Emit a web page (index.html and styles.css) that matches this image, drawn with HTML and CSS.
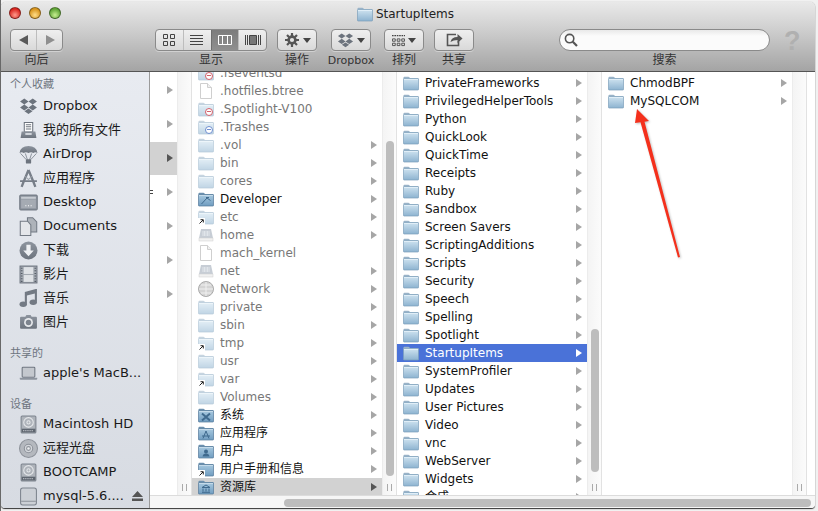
FILE: index.html
```html
<!DOCTYPE html>
<html lang="zh">
<head>
<meta charset="utf-8">
<title>StartupItems</title>
<link rel="stylesheet" href="styles.css">
</head>
<body>
<svg class="defs" width="0" height="0" aria-hidden="true">
  <defs>
    <linearGradient id="fg" x1="0" y1="0" x2="0" y2="1"><stop offset="0" stop-color="#cfe3f0"/><stop offset="1" stop-color="#8db3d0"/></linearGradient>
    <linearGradient id="fgd" x1="0" y1="0" x2="0" y2="1"><stop offset="0" stop-color="#a9cae0"/><stop offset="1" stop-color="#6f9cc0"/></linearGradient>
    <linearGradient id="sg" x1="0" y1="0" x2="0" y2="1"><stop offset="0" stop-color="#8d949e"/><stop offset="1" stop-color="#6d747e"/></linearGradient>
    <symbol id="folder" viewBox="0 0 16 16">
      <path d="M.5 4V2.600q0-.9.9-.9h4q.7 0 1 .6l.5.7h8q.6 0 .6.7V5z" fill="#9ab3c8"/>
      <rect x=".5" y="3.600" width="15" height="11.400" rx=".6" fill="url(#fg)" stroke="#7d9fba" stroke-width=".7"/>
      <rect x="1" y="4" width="14" height=".8" fill="#e8f3fa"/>
    </symbol>
    <symbol id="folderd" viewBox="0 0 16 16">
      <path d="M.5 4V2.600q0-.9.9-.9h4q.7 0 1 .6l.5.7h8q.6 0 .6.7V5z" fill="#6c90ae"/>
      <rect x=".5" y="3.600" width="15" height="11.400" rx=".6" fill="url(#fgd)" stroke="#55799a" stroke-width=".7"/>
      <rect x="1" y="4" width="14" height=".8" fill="#cde0ee"/>
    </symbol>
    <symbol id="f-dev" viewBox="0 0 16 16"><use href="#folderd" width="16" height="16"/><path d="M3.500 13 9 7l3.500 2.500M8 6.500h3" fill="none" stroke="#3f6a8e" stroke-width="1"/></symbol>
    <symbol id="f-sys" viewBox="0 0 16 16"><use href="#folderd" width="16" height="16"/><path d="M4 6.500 12 13.500M12 6.500 4 13.500" stroke="#3f6a8e" stroke-width="2"/></symbol>
    <symbol id="f-app" viewBox="0 0 16 16"><use href="#folderd" width="16" height="16"/><path d="M8 6 5 13.500M8 6l3 7.500M4 11h8" fill="none" stroke="#3f6a8e"/></symbol>
    <symbol id="f-usr" viewBox="0 0 16 16"><use href="#folderd" width="16" height="16"/><circle cx="8" cy="8.500" r="2" fill="#3f6a8e"/><path d="M4.500 13.500q.5-3 3.500-3t3.500 3z" fill="#3f6a8e"/></symbol>
    <symbol id="f-lib" viewBox="0 0 16 16"><use href="#folderd" width="16" height="16"/><path d="M8 6 4 8.500h8zM5 9.500v3M8 9.500v3M11 9.500v3M4 13.300h8" fill="none" stroke="#3f6a8e"/></symbol>
    <symbol id="file" viewBox="0 0 16 16">
      <path d="M2.500.5h7l4 4v11h-11z" fill="#fff" stroke="#cfcfcf"/><path d="M9.500.5v4h4" fill="#f0f0f0" stroke="#cfcfcf"/>
    </symbol>
    <symbol id="share-drive" viewBox="0 0 16 16">
      <path d="M3 2h10l2 9v3H1v-3z" fill="#9aa6b4"/><rect x="1" y="11" width="14" height="3" fill="#e6e6e6" stroke="#aaa" stroke-width=".5"/>
      <path d="M5 4v5M8 4v5M11 4v5M6.500 4v5M9.500 4v5" stroke="#dce3ea" stroke-width=".7"/>
    </symbol>
    <symbol id="globe" viewBox="0 0 16 16">
      <circle cx="8" cy="8" r="7.500" fill="#d4d4d4" stroke="#aaa"/><path d="M1 8h14M8 1v14M3 4h10M3 12h10" stroke="#f0f0f0" fill="none"/>
    </symbol>
    <symbol id="alias-mark" viewBox="0 0 7 7">
      <rect width="7" height="7" fill="#fff"/><path d="M1.500 5.500 5 2M2.500 1.700H5.300V4.500" fill="none" stroke="#222"/>
    </symbol>
    <symbol id="i-dropbox" viewBox="0 0 18 18">
      <path d="M5 1.500 9 4.200 5 7 1 4.200zM13 1.500 17 4.200 13 7 9 4.200zM5 7.200 9 10 5 12.700 1 10zM13 7.200 17 10 13 12.700 9 10zM9 11 12.800 13.500 9 16.200 5.200 13.500z" fill="#6c737d"/>
    </symbol>
  </defs>
</svg>
<main class="window">
  <header class="chrome">
    <div class="titlebar">
      <span class="lights"><i class="light red"></i><i class="light amber"></i><i class="light green"></i></span>
      <span class="title"><svg class="ic16"><use href="#folder"/></svg>StartupItems</span>
    </div>
    <div class="toolbar">
      <div class="tool t-nav">
        <div class="btn seg">
          <span class="cell"><svg class="tb" viewBox="0 0 16 16"><path d="M12 3v10L3 8z" fill="#5a5a5a"/></svg></span>
          <span class="cell"><svg class="tb" viewBox="0 0 16 16"><path d="M4 3v10l9-5z" fill="#8f8f8f"/></svg></span>
        </div>
        <span class="lab">向后</span>
      </div>
      <div class="tool t-view">
        <div class="btn seg">
          <span class="cell"><svg class="tb" viewBox="0 0 16 16"><path d="M2.500 2.500h4v4h-4zM9.500 2.500h4v4h-4zM2.500 9.500h4v4h-4zM9.500 9.500h4v4h-4z" fill="none" stroke="#444"/></svg></span>
          <span class="cell"><svg class="tb" viewBox="0 0 16 16"><path d="M1 3.500h13M1 6.500h13M1 9.500h13M1 12.500h13" stroke="#444" fill="none"/></svg></span>
          <span class="cell on"><svg class="tb" viewBox="0 0 16 16"><path d="M1.500 3.500h13v9h-13zM5.500 3.500v9M10.500 3.500v9" stroke="#fff" fill="none"/></svg></span>
          <span class="cell"><svg class="tb" viewBox="0 0 16 16"><path d="M4.500 3.500h7v9h-7z" fill="#777" stroke="#444"/><path d="M.5 3v10M2.500 3v10M13.500 3v10M15.500 3v10" stroke="#444" fill="none"/></svg></span>
        </div>
        <span class="lab">显示</span>
      </div>
      <div class="tool t-act">
        <div class="btn wide">
          <svg class="tb" viewBox="0 0 16 16"><circle cx="8" cy="8" r="3.400" fill="none" stroke="#555" stroke-width="2.600"/><path d="M8 1v3M8 12v3M1 8h3M12 8h3M3 3l2.200 2.200M10.800 10.800 13 13M13 3l-2.200 2.200M5.200 10.800 3 13" stroke="#555" stroke-width="2.200"/></svg>
          <i class="caret"></i>
        </div>
        <span class="lab">操作</span>
      </div>
      <div class="tool t-drop">
        <div class="btn wide">
          <svg class="tb tb-drop"><use href="#i-dropbox"/></svg>
          <i class="caret"></i>
        </div>
        <span class="lab lab-latin">Dropbox</span>
      </div>
      <div class="tool t-arr">
        <div class="btn wide">
          <svg class="tb tb-arr" viewBox="0 0 12 12"><path d="M0 1.500h12" stroke="#444" stroke-dasharray="1.500 .7"/><path d="M.5 4.500h2.500v2.200H.5zM4.800 4.500h2.500v2.200H4.800zM9 4.500h2.500v2.200H9zM.5 8.500h2.500v2.200H.5zM4.800 8.500h2.500v2.200H4.800zM9 8.500h2.500v2.200H9z" fill="none" stroke="#444" stroke-width=".8"/></svg>
          <i class="caret"></i>
        </div>
        <span class="lab">排列</span>
      </div>
      <div class="tool t-share">
        <div class="btn wide">
          <svg class="tb tb-share" viewBox="0 0 20 16"><path d="M12 2.500H3.500v11h11V9" fill="none" stroke="#555" stroke-width="1.600"/><path d="M6.500 10q1-5 7-5V2l5 4.500-5 4.500V8q-4 0-7 2z" fill="#555"/></svg>
        </div>
        <span class="lab">共享</span>
      </div>
      <div class="tool t-search">
        <div class="searchbox">
          <svg class="mag" viewBox="0 0 14 14"><circle cx="5.600" cy="5.600" r="4.200" fill="none" stroke="#555" stroke-width="1.600"/><path d="M8.800 8.800 13 13" stroke="#555" stroke-width="2.200"/></svg>
        </div>
        <span class="lab">搜索</span>
      </div>
      <span class="help">?</span>
    </div>
  </header>
  <div class="body">
    <nav class="sidebar">
      <h2 class="sec first">个人收藏</h2>
      <a class="item"><svg class="si"><use href="#i-dropbox"/></svg>Dropbox</a>
      <a class="item"><svg class="si" viewBox="0 0 18 18"><path d="M5 1.500h8v9H5z" fill="#fff" stroke="#6d747e"/><path d="M6.500 3.500h5M6.500 5.500h5M6.500 7.500h5" stroke="#6d747e"/><path d="M2.500 10h13l1 6h-15z" fill="url(#sg)"/><rect x="6" y="11.500" width="6" height="1.600" fill="#dfe3e8"/></svg>我的所有文件</a>
      <a class="item"><svg class="si" viewBox="0 0 18 18"><path d="M.5 7.500Q1.500 1 9 1t8.500 6.500q-2-1.500-4 0-2-1.500-4.500 0-2.500-1.500-4.500 0-2-1.500-4 0z" fill="url(#sg)"/><path d="M1.500 8 7 14M16.500 8 11 14M6 8l2 6M12 8l-2 6" stroke="#7d848e" fill="none" stroke-width=".8"/><rect x="6.500" y="13.500" width="5" height="4" rx=".8" fill="#6d747e"/></svg>AirDrop</a>
      <a class="item"><svg class="si" viewBox="0 0 18 18"><path d="M9 1 4 13l-1.500 4M9 1l5 12 1.500 4" fill="none" stroke="#777e88" stroke-width="2.200"/><path d="M1 11.500h16" stroke="#777e88" stroke-width="1.800"/><path d="M6 7 9 10l3-3" fill="none" stroke="#a0a6ae"/></svg>应用程序</a>
      <a class="item"><svg class="si" viewBox="0 0 18 18"><rect x=".7" y="2" width="16.600" height="14" rx="1" fill="#8b929c" stroke="#767d87"/><rect x="2" y="3.500" width="14" height="2" fill="#c7ccd2"/><rect x="2" y="6" width="14" height="8.500" fill="#a5abb3"/><path d="M6 12h1M8.500 12h1M11 12h1" stroke="#fff"/></svg>Desktop</a>
      <a class="item"><svg class="si" viewBox="0 0 18 18"><path d="M8 .7h5l3.800 4v9.500H8z" fill="#aeb3ba" stroke="#737a84"/><path d="M1.200 4h7l3 3.500v10h-10z" fill="#e4e6ea" stroke="#737a84"/></svg>Documents</a>
      <a class="item"><svg class="si" viewBox="0 0 18 18"><circle cx="9" cy="9" r="8.500" fill="url(#sg)"/><path d="M7 3.500h4V9h3l-5 5.500L4 9h3z" fill="#eef0f3"/></svg>下载</a>
      <a class="item"><svg class="si" viewBox="0 0 18 18"><rect x="1" y="1" width="16" height="16" fill="#a3a9b1" stroke="#6f7680"/><rect x="4.500" y="2" width="9" height="6.500" fill="#dfe2e6"/><rect x="4.500" y="9.500" width="9" height="6.500" fill="#dfe2e6"/><path d="M1.800 3h1.500M1.800 5.500h1.500M1.800 8h1.500M1.800 10.500h1.500M1.800 13h1.500M1.800 15.500h1.500M14.700 3h1.500M14.700 5.500h1.500M14.700 8h1.500M14.700 10.500h1.500M14.700 13h1.500M14.700 15.500h1.500" stroke="#565d67"/></svg>影片</a>
      <a class="item"><svg class="si" viewBox="0 0 18 18"><path d="M6.500 14V3.500L16 1v11" fill="none" stroke="#737a84" stroke-width="2"/><path d="M6.500 3.500 16 1v3L6.500 6.500z" fill="#737a84"/><ellipse cx="4" cy="14.500" rx="3.500" ry="2.600" fill="#737a84"/><ellipse cx="13.500" cy="12.500" rx="3.500" ry="2.600" fill="#737a84"/></svg>音乐</a>
      <a class="item"><svg class="si" viewBox="0 0 18 18"><path d="M6 3.500 7 2h4l1 1.500h4q1 0 1 1V14q0 1-1 1H2q-1 0-1-1V4.500q0-1 1-1z" fill="url(#sg)"/><circle cx="9" cy="9" r="4.200" fill="#e8eaed"/><circle cx="9" cy="9" r="2.600" fill="#7d848e"/></svg>图片</a>
      <h2 class="sec">共享的</h2>
      <a class="item"><svg class="si" viewBox="0 0 18 18"><rect x="3" y="3" width="12" height="9.500" rx=".8" fill="#c4c8ce" stroke="#6f7680"/><path d="M.7 13h16.600v1q0 1-1 1H1.700q-1 0-1-1z" fill="#8d949e"/></svg>apple's MacB...</a>
      <h2 class="sec">设备</h2>
      <a class="item"><svg class="si" viewBox="0 0 18 18"><rect x="2" y="1" width="14" height="16" rx="1" fill="#aeb3ba" stroke="#7d848e"/><circle cx="9" cy="7" r="4.500" fill="none" stroke="#e6e8eb"/><circle cx="9" cy="7" r="1.500" fill="none" stroke="#e6e8eb"/><rect x="2.500" y="13" width="13" height="3.500" fill="#5f6670"/><path d="M4 14.800h10" stroke="#c8ccd2" stroke-dasharray="1 1"/></svg>Macintosh HD</a>
      <a class="item"><svg class="si" viewBox="0 0 18 18"><circle cx="9" cy="9" r="8.500" fill="#b4b8be" stroke="#8d929a"/><circle cx="9" cy="9" r="4" fill="#d4d7db" stroke="#8d929a"/><circle cx="9" cy="9" r="1.800" fill="#edeff1" stroke="#8d929a"/></svg>远程光盘</a>
      <a class="item"><svg class="si" viewBox="0 0 18 18"><rect x="2" y="1" width="14" height="16" rx="1" fill="#aeb3ba" stroke="#7d848e"/><circle cx="9" cy="7" r="4.500" fill="none" stroke="#e6e8eb"/><circle cx="9" cy="7" r="1.500" fill="none" stroke="#e6e8eb"/><rect x="2.500" y="13" width="13" height="3.500" fill="#5f6670"/><path d="M4 14.800h10" stroke="#c8ccd2" stroke-dasharray="1 1"/></svg>BOOTCAMP</a>
      <a class="item"><svg class="si" viewBox="0 0 18 18"><rect x="1.500" y="1" width="15" height="16" rx="2" fill="#ccd0d6" stroke="#7d848e"/><path d="M2 13.500h14" stroke="#8d929a"/></svg><span class="grow">mysql-5.6....</span><svg class="eject" viewBox="0 0 11 10"><path d="M5.500 0 11 6H0zM0 7.500h11V10H0z" fill="#555"/></svg></a>
    </nav>
    <div class="main">
      <div class="columns">
        <section class="col c1">
          <div class="list">
            <div class="trow"><i class="arr"></i></div>
            <div class="trow"><i class="arr"></i></div>
            <div class="trow sel"><i class="arr"></i></div>
            <div class="trow"><i class="frag"></i><i class="arr"></i></div>
            <div class="trow"><i class="arr"></i></div>
            <div class="trow"><i class="arr"></i></div>
            <div class="trow"><i class="arr"></i></div>
          </div>
          <div class="gutter"><i class="grip"></i></div>
        </section>
        <section class="col">
          <div class="list scrolled">
            <div class="row dim"><svg class="ic16 faded"><use href="#folder"/></svg><span class="name">.fseventsd</span><i class="badge stop"></i></div>
            <div class="row dim"><svg class="ic16"><use href="#file"/></svg><span class="name">.hotfiles.btree</span></div>
            <div class="row dim"><svg class="ic16 faded"><use href="#folder"/></svg><span class="name">.Spotlight-V100</span><i class="badge stop"></i></div>
            <div class="row dim"><svg class="ic16 faded"><use href="#folder"/></svg><span class="name">.Trashes</span><i class="badge plus"></i></div>
            <div class="row dim"><svg class="ic16 faded"><use href="#folder"/></svg><span class="name">.vol</span><i class="arr"></i></div>
            <div class="row dim"><svg class="ic16 faded"><use href="#folder"/></svg><span class="name">bin</span><i class="arr"></i></div>
            <div class="row dim"><svg class="ic16 faded"><use href="#folder"/></svg><span class="name">cores</span><i class="arr"></i></div>
            <div class="row"><svg class="ic16"><use href="#f-dev"/></svg><span class="name">Developer</span><i class="arr"></i></div>
            <div class="row dim"><svg class="ic16 faded"><use href="#folder"/></svg><span class="name">etc</span><i class="arr"></i><svg class="alias"><use href="#alias-mark"/></svg></div>
            <div class="row dim"><svg class="ic16 faded"><use href="#share-drive"/></svg><span class="name">home</span><i class="arr"></i></div>
            <div class="row dim"><svg class="ic16"><use href="#file"/></svg><span class="name">mach_kernel</span></div>
            <div class="row dim"><svg class="ic16 faded"><use href="#share-drive"/></svg><span class="name">net</span><i class="arr"></i></div>
            <div class="row dim"><svg class="ic16"><use href="#globe"/></svg><span class="name">Network</span><i class="arr"></i></div>
            <div class="row dim"><svg class="ic16 faded"><use href="#folder"/></svg><span class="name">private</span><i class="arr"></i></div>
            <div class="row dim"><svg class="ic16 faded"><use href="#folder"/></svg><span class="name">sbin</span><i class="arr"></i></div>
            <div class="row dim"><svg class="ic16 faded"><use href="#folder"/></svg><span class="name">tmp</span><i class="arr"></i><svg class="alias"><use href="#alias-mark"/></svg></div>
            <div class="row dim"><svg class="ic16 faded"><use href="#folder"/></svg><span class="name">usr</span><i class="arr"></i></div>
            <div class="row dim"><svg class="ic16 faded"><use href="#folder"/></svg><span class="name">var</span><i class="arr"></i><svg class="alias"><use href="#alias-mark"/></svg></div>
            <div class="row dim"><svg class="ic16 faded"><use href="#folder"/></svg><span class="name">Volumes</span><i class="arr"></i></div>
            <div class="row"><svg class="ic16"><use href="#f-sys"/></svg><span class="name">系统</span><i class="arr"></i></div>
            <div class="row"><svg class="ic16"><use href="#f-app"/></svg><span class="name">应用程序</span><i class="arr"></i></div>
            <div class="row"><svg class="ic16"><use href="#f-usr"/></svg><span class="name">用户</span><i class="arr"></i></div>
            <div class="row"><svg class="ic16"><use href="#folderd"/></svg><span class="name">用户手册和信息</span><i class="arr"></i><svg class="alias"><use href="#alias-mark"/></svg></div>
            <div class="row parent"><svg class="ic16"><use href="#f-lib"/></svg><span class="name">资源库</span><i class="arr"></i></div>
          </div>
          <div class="gutter"><i class="thumb t2"></i><i class="grip"></i></div>
        </section>
        <section class="col">
          <div class="list">
            <div class="row"><svg class="ic16"><use href="#folder"/></svg><span class="name">PrivateFrameworks</span><i class="arr"></i></div>
            <div class="row"><svg class="ic16"><use href="#folder"/></svg><span class="name">PrivilegedHelperTools</span><i class="arr"></i></div>
            <div class="row"><svg class="ic16"><use href="#folder"/></svg><span class="name">Python</span><i class="arr"></i></div>
            <div class="row"><svg class="ic16"><use href="#folder"/></svg><span class="name">QuickLook</span><i class="arr"></i></div>
            <div class="row"><svg class="ic16"><use href="#folder"/></svg><span class="name">QuickTime</span><i class="arr"></i></div>
            <div class="row"><svg class="ic16"><use href="#folder"/></svg><span class="name">Receipts</span><i class="arr"></i></div>
            <div class="row"><svg class="ic16"><use href="#folder"/></svg><span class="name">Ruby</span><i class="arr"></i></div>
            <div class="row"><svg class="ic16"><use href="#folder"/></svg><span class="name">Sandbox</span><i class="arr"></i></div>
            <div class="row"><svg class="ic16"><use href="#folder"/></svg><span class="name">Screen Savers</span><i class="arr"></i></div>
            <div class="row"><svg class="ic16"><use href="#folder"/></svg><span class="name">ScriptingAdditions</span><i class="arr"></i></div>
            <div class="row"><svg class="ic16"><use href="#folder"/></svg><span class="name">Scripts</span><i class="arr"></i></div>
            <div class="row"><svg class="ic16"><use href="#folder"/></svg><span class="name">Security</span><i class="arr"></i></div>
            <div class="row"><svg class="ic16"><use href="#folder"/></svg><span class="name">Speech</span><i class="arr"></i></div>
            <div class="row"><svg class="ic16"><use href="#folder"/></svg><span class="name">Spelling</span><i class="arr"></i></div>
            <div class="row"><svg class="ic16"><use href="#folder"/></svg><span class="name">Spotlight</span><i class="arr"></i></div>
            <div class="row active"><svg class="ic16"><use href="#folder"/></svg><span class="name">StartupItems</span><i class="arr"></i></div>
            <div class="row"><svg class="ic16"><use href="#folder"/></svg><span class="name">SystemProfiler</span><i class="arr"></i></div>
            <div class="row"><svg class="ic16"><use href="#folder"/></svg><span class="name">Updates</span><i class="arr"></i></div>
            <div class="row"><svg class="ic16"><use href="#folder"/></svg><span class="name">User Pictures</span><i class="arr"></i></div>
            <div class="row"><svg class="ic16"><use href="#folder"/></svg><span class="name">Video</span><i class="arr"></i></div>
            <div class="row"><svg class="ic16"><use href="#folder"/></svg><span class="name">vnc</span><i class="arr"></i></div>
            <div class="row"><svg class="ic16"><use href="#folder"/></svg><span class="name">WebServer</span><i class="arr"></i></div>
            <div class="row"><svg class="ic16"><use href="#folder"/></svg><span class="name">Widgets</span><i class="arr"></i></div>
            <div class="row"><svg class="ic16"><use href="#folder"/></svg><span class="name">合成</span><i class="arr"></i></div>
          </div>
          <div class="gutter"><i class="thumb t3"></i><i class="grip"></i></div>
        </section>
        <section class="col">
          <div class="list">
            <div class="row"><svg class="ic16"><use href="#folder"/></svg><span class="name">ChmodBPF</span><i class="arr"></i></div>
            <div class="row"><svg class="ic16"><use href="#folder"/></svg><span class="name">MySQLCOM</span><i class="arr"></i></div>
          </div>
          <div class="gutter"><i class="grip"></i></div>
        </section>
        <div class="rest"></div>
      </div>
      <div class="hscroll"><i class="hthumb"></i></div>
    </div>
  </div>
</main>
<svg class="annot" viewBox="0 0 60 160" aria-hidden="true">
  <path d="M5 1 3 15 8.500 14.300 46 149.500 48 149 12.500 13.700 17 13z" fill="#f4301c"/>
</svg>
</body>
</html>
```
FILE: styles.css
```css
* { box-sizing: border-box; }
html, body { margin: 0; height: 511px; overflow: hidden; }
body {
  position: relative;
  background: linear-gradient(90deg, #6a6a6a 1px, #f1f1f1 1px);
  font-family: "DejaVu Sans", "Noto Sans CJK SC", sans-serif;
  font-size: 12px;
  color: #111;
}
.defs { position: absolute; }
.window {
  position: absolute;
  left: 1px;
  top: 2px;
  width: 814px;
  height: 506px;
  display: flex;
  flex-direction: column;
  border-radius: 5px 5px 4px 4px;
  overflow: hidden;
  background: #fff;
  box-shadow: 0 1px 1px #333, 0 0 1px #999;
}
.chrome {
  height: 70px;
  flex: none;
  background: linear-gradient(#e9e9e9, #d2d2d2 35%, #a4a4a4);
  border-bottom: 1px solid #555;
}
.titlebar {
  height: 22px;
  display: flex;
  align-items: center;
  justify-content: center;
  position: relative;
}
.lights { position: absolute; left: 8px; top: 5px; display: flex; gap: 8px; }
.light { width: 12px; height: 12px; border-radius: 50%; border: 1px solid rgba(0,0,0,.4); }
.red { background: radial-gradient(circle at 50% 70%, #ff9a8c, #d9251f 70%); }
.amber { background: radial-gradient(circle at 50% 70%, #ffdd88, #d8941c 70%); }
.green { background: radial-gradient(circle at 50% 70%, #c6ee90, #5fa436 70%); }
.title {
  display: flex;
  align-items: center;
  gap: 3px;
  margin: 1px 0 0 -5px;
  font-size: 12px;
  color: #222;
}
.ic16 { width: 16px; height: 16px; flex: none; }
.toolbar { display: flex; align-items: flex-start; padding: 5px 0 0 9px; }
.tool { display: flex; flex-direction: column; align-items: center; flex: none; }
.lab {
  margin-top: 2px;
  font-size: 12px;
  line-height: 15px;
  color: #333;
  white-space: nowrap;
}
.lab-latin { font-size: 11px; }
.t-nav { width: 53px; }
.t-view { width: 112px; margin-left: 92px; }
.t-act { width: 40px; margin-left: 10px; }
.t-drop { width: 40px; margin-left: 14px; }
.t-arr { width: 40px; margin-left: 13px; }
.t-share { width: 40px; margin-left: 10px; }
.t-search { width: 211px; margin-left: 85px; }
.btn {
  height: 22px;
  width: 100%;
  border: 1px solid #8a8a8a;
  border-radius: 4px;
  background: linear-gradient(#efefef, #d9d9d9);
  box-shadow: 0 1px 0 rgba(255,255,255,.35);
  display: flex;
  align-items: center;
  justify-content: center;
  overflow: hidden;
}
.wide { gap: 3px; }
.cell {
  flex: 1;
  height: 100%;
  display: flex;
  align-items: center;
  justify-content: center;
  border-left: 1px solid #bdbdbd;
}
.cell:first-child { border-left: 0; }
.on { background: linear-gradient(#7c7c7c, #8f8f8f); border-left-color: #6f6f6f; }
.tb { width: 16px; height: 16px; flex: none; }
.tb-drop { width: 17px; height: 17px; }
.tb-share { width: 20px; height: 16px; }
.tb-arr { width: 13px; height: 13px; }
.caret {
  width: 0;
  height: 0;
  border-left: 4px solid transparent;
  border-right: 4px solid transparent;
  border-top: 5px solid #444;
}
.searchbox {
  width: 100%;
  height: 22px;
  border: 1px solid #8a8a8a;
  border-radius: 11px;
  background: linear-gradient(#e9e9e9, #fbfbfb 30%);
  display: flex;
  align-items: center;
  padding-left: 4px;
}
.mag { width: 14px; height: 14px; }
.help {
  margin-left: 14px;
  font-family: "Liberation Sans", sans-serif;
  font-weight: bold;
  font-size: 27px;
  line-height: 24px;
  color: #b0b0b0;
}
.body { flex: 1; min-height: 0; display: flex; }
.sidebar {
  width: 149px;
  flex: none;
  background: linear-gradient(#e8ebf1, #d7dbe2);
  border-right: 1px solid #9a9a9a;
}
.sec {
  margin: 0;
  height: 27px;
  padding: 11px 0 0 9px;
  font-size: 11px;
  font-weight: normal;
  line-height: 18px;
  color: #6e7580;
}
.sec.first { height: 22px; padding-top: 4px; }
.item {
  height: 24px;
  display: flex;
  align-items: center;
  gap: 5px;
  padding-left: 18px;
  font-size: 13px;
  line-height: 16px;
  color: #1a1a1a;
  white-space: nowrap;
}
.si { width: 19px; height: 19px; flex: none; }
.grow { flex: 1; }
.eject { width: 11px; height: 10px; margin-right: 6px; flex: none; }
.main { flex: 1; min-width: 0; display: flex; flex-direction: column; }
.columns { flex: 1; min-height: 0; display: flex; }
.col { flex: none; width: 205px; display: flex; overflow: hidden; }
.c1 { width: 42px; }
.list { flex: 1; min-width: 0; padding-top: 2px; overflow: hidden; }
.scrolled { padding-top: 0; margin-top: -8px; }
.gutter {
  width: 15px;
  flex: none;
  position: relative;
  background: linear-gradient(90deg, #f4f4f4, #fbfbfb);
  border-left: 1px solid #ececec;
  border-right: 1px solid #e2e2e2;
}
.rest { flex: 1; background: #fff; }
.trow {
  position: relative;
  height: 34px;
  display: flex;
  align-items: center;
  justify-content: flex-end;
  padding-right: 4px;
}
.trow:first-child { margin-top: -1px; }
.sel { background: #d2d2d2; box-shadow: inset 0 1px 0 #fff; }
.sel .arr { border-left-color: #555; }
.frag {
  position: absolute;
  left: 0;
  top: 15px;
  width: 3px;
  height: 4px;
  border-top: 1px solid #444;
  border-bottom: 1px solid #444;
}
.row {
  position: relative;
  height: 18px;
  display: flex;
  align-items: center;
  padding: 0 5px 0 6px;
  white-space: nowrap;
  font-size: 12px;
  line-height: 18px;
  color: #111;
}
.name { margin-left: 6px; flex: 1; height: 18px; }
.dim .name { color: #777; }
.faded { opacity: .55; }
.arr {
  display: block;
  width: 0;
  height: 0;
  border-top: 4px solid transparent;
  border-bottom: 4px solid transparent;
  border-left: 6px solid #a6a6a6;
  flex: none;
}
.parent { background: #d2d2d2; }
.parent .arr { border-left-color: #555; }
.active { background: #4a72d8; color: #fff; }
.active .arr { border-left-color: #fff; }
.badge {
  position: absolute;
  left: 13px;
  top: 8px;
  width: 8px;
  height: 8px;
  border-radius: 50%;
  background: #fff;
  border: 1px solid #d4606a;
}
.badge::after { content: ""; position: absolute; left: 1px; top: 2px; width: 4px; height: 1px; background: #d4606a; }
.badge.plus { border-color: #6f8fd0; }
.badge.plus::after { background: #6f8fd0; }
.alias {
  position: absolute;
  left: 6px;
  top: 10px;
  width: 7px;
  height: 7px;
}
.thumb {
  position: absolute;
  left: 3px;
  width: 8px;
  border-radius: 4px;
  background: #bdbdbd;
}
.t2 { top: 69px; height: 335px; }
.t3 { top: 257px; height: 143px; }
.grip {
  position: absolute;
  left: 4px;
  bottom: 4px;
  width: 5px;
  height: 7px;
  border-left: 1px solid #aaa;
  border-right: 1px solid #aaa;
}
.hscroll {
  position: relative;
  height: 13px;
  flex: none;
  background: #f6f6f6;
  border-top: 1px solid #dcdcdc;
}
.hthumb {
  position: absolute;
  left: 134px;
  top: 3px;
  width: 527px;
  height: 8px;
  border-radius: 4px;
  background: #bdbdbd;
}
.annot {
  position: absolute;
  left: 632px;
  top: 108px;
  width: 60px;
  height: 160px;
  filter: drop-shadow(1px 1px 1px rgba(0,0,0,.25));
}
```
